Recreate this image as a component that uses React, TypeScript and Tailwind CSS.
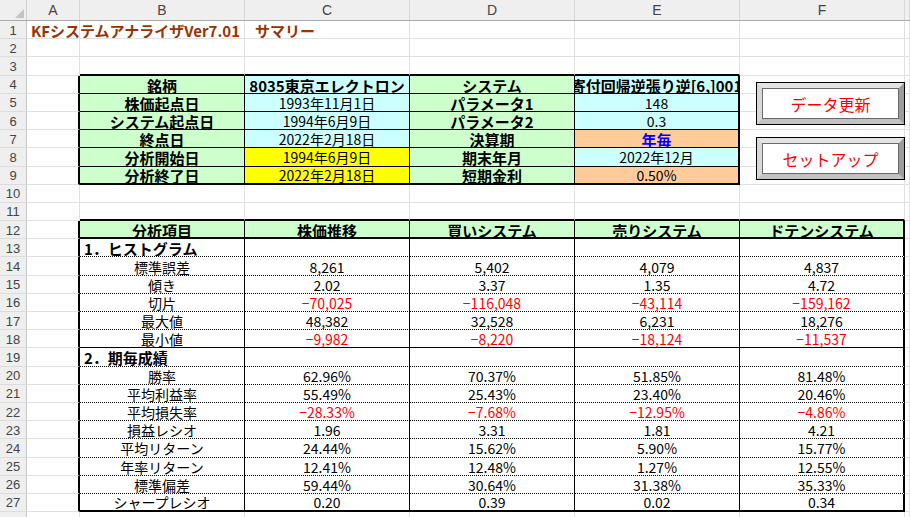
import clsx from "clsx";

type B = "g" | "1" | "2" | "d";
type Cell = { t?: string; cls?: string; al?: "l" | "c"; r?: B; b?: B; over?: boolean };

const RIGHT: Record<B, string> = {
  g: "border-r border-r-[#e1e1e1]",
  "1": "border-r border-r-black",
  "2": "border-r-2 border-r-black",
  d: "border-r border-r-black",
};
const BOTTOM: Record<B, string> = {
  g: "border-b border-b-[#e1e1e1]",
  "1": "border-b border-b-black",
  "2": "border-b-2 border-b-black",
  d: "border-b border-b-black [border-bottom-style:dotted]",
};
const W = ["w-[53px]", "w-[165px]", "w-[165px]", "w-[165px]", "w-[165px]", "w-[165px]", "flex-1"];

const GREEN = "bg-[#ccffcc] font-bold text-[15px]";
const CYAN = "bg-[#ccffff]";
const YELLOW = "bg-[#ffff00]";
const ORANGE = "bg-[#ffcc99]";
const RED = "text-[#ff0000]";

const top: [string, string, string, string, string, string][] = [
  // label, value, value class, label2, value2, value2 class
  ["銘柄", "8035東京エレクトロン", CYAN + " font-bold text-[15px]", "システム", "寄付回帰逆張り逆[6,]001", CYAN + " font-bold text-[15px]"],
  ["株価起点日", "1993年11月1日", CYAN, "パラメータ1", "148", CYAN],
  ["システム起点日", "1994年6月9日", CYAN, "パラメータ2", "0.3", CYAN],
  ["終点日", "2022年2月18日", CYAN, "決算期", "年毎", ORANGE + " font-bold text-[15px] text-[#0000ff]"],
  ["分析開始日", "1994年6月9日", YELLOW, "期末年月", "2022年12月", CYAN],
  ["分析終了日", "2022年2月18日", YELLOW, "短期金利", "0.50%", ORANGE],
];

const stats: (string | null)[][] = [
  ["1．ヒストグラム"],
  ["標準誤差", "8,261", "5,402", "4,079", "4,837"],
  ["傾き", "2.02", "3.37", "1.35", "4.72"],
  ["切片", "-70,025", "-116,048", "-43,114", "-159,162"],
  ["最大値", "48,382", "32,528", "6,231", "18,276"],
  ["最小値", "-9,982", "-8,220", "-18,124", "-11,537"],
  ["2．期毎成績"],
  ["勝率", "62.96%", "70.37%", "51.85%", "81.48%"],
  ["平均利益率", "55.49%", "25.43%", "23.40%", "20.46%"],
  ["平均損失率", "-28.33%", "-7.68%", "-12.95%", "-4.86%"],
  ["損益レシオ", "1.96", "3.31", "1.81", "4.21"],
  ["平均リターン", "24.44%", "15.62%", "5.90%", "15.77%"],
  ["年率リターン", "12.41%", "12.48%", "1.27%", "12.55%"],
  ["標準偏差", "59.44%", "30.64%", "31.38%", "35.33%"],
  ["シャープレシオ", "0.20", "0.39", "0.02", "0.34"],
];

function buildSheet(): Cell[][] {
  const rows: Cell[][] = [];
  for (let r = 0; r < 28; r++) rows.push(Array.from({ length: 7 }, () => ({})));
  const set = (row: number, col: number, c: Cell) => {
    rows[row - 1][col] = { ...rows[row - 1][col], ...c };
  };

  set(1, 0, {
    t: "KFシステムアナライザVer7.01　サマリー",
    cls: "font-bold text-[15px] text-[#993300]",
    al: "l",
    over: true,
  });

  // top table B4:E9
  for (let c = 1; c <= 4; c++) set(3, c, { b: "2" });
  top.forEach((row, i) => {
    const r = 4 + i;
    const last = r === 9;
    set(r, 0, { r: "2" });
    set(r, 1, { t: row[0], cls: GREEN, r: "1", b: last ? "2" : "1" });
    set(r, 2, { t: row[1], cls: row[2], r: "1", b: last ? "2" : "1" });
    set(r, 3, { t: row[3], cls: GREEN, r: "1", b: last ? "2" : "1" });
    set(r, 4, { t: row[4], cls: row[5], r: "2", b: last ? "2" : "1" });
  });

  // bottom table B12:F27
  for (let c = 1; c <= 5; c++) set(11, c, { b: "2" });
  set(12, 0, { r: "2" });
  ["分析項目", "株価推移", "買いシステム", "売りシステム", "ドテンシステム"].forEach((h, i) =>
    set(12, i + 1, { t: h, cls: GREEN, r: i === 4 ? "2" : "1", b: "2" })
  );
  stats.forEach((row, i) => {
    const r = 13 + i;
    const b: B = r === 27 ? "2" : r === 18 ? "1" : "d";
    set(r, 0, { r: "2" });
    for (let c = 1; c <= 5; c++) {
      const v = row[c - 1] ?? "";
      const section = row.length === 1 && c === 1;
      set(r, c, {
        t: v.startsWith("-") ? "−" + v.slice(1) : v,
        cls: section ? "font-bold text-[15px]" : v.startsWith("-") ? RED : "",
        al: section ? "l" : "c",
        r: c === 5 ? "2" : "1",
        b,
      });
    }
  });
  return rows;
}

const sheet = buildSheet();

function SheetButton({ label, top }: { label: string; top: string }) {
  return (
    <div className={clsx("absolute left-[756px] w-[149px] h-[43px] border border-black bg-white", top)}>
      <div className="h-full w-full border-[5px] border-t-[#e4e4e4] border-l-[#d8d8d8] border-r-[#9c9c9c] border-b-[#c2c2c2]">
        <div className="h-full w-full border border-[#6a6a6a] bg-white flex items-center justify-center text-[16px] leading-[18px] text-[#ff0000] pt-[1px]">
          {label}
        </div>
      </div>
    </div>
  );
}

export default function App() {
  return (
    <div className="relative h-screen w-screen overflow-hidden bg-white font-['Noto_Sans_CJK_JP',sans-serif] text-[14px] text-black">
      {/* column headers */}
      <div className="flex h-[21px] bg-[#efefef] border-b border-b-[#ababab] font-['Liberation_Sans',sans-serif] text-[14px] text-[#444]">
        <div className="relative w-[27px] shrink-0 border-r border-r-[#d0d0d0]">
          <svg className="absolute left-0 top-0" width="27" height="20" viewBox="0 0 27 20">
            <polygon points="24,9 24,18 15,18" fill="#c4c4c4" />
          </svg>
        </div>
        {["A", "B", "C", "D", "E", "F", ""].map((l, i) => (
          <div key={i} className={clsx("shrink-0 flex items-center justify-center border-r border-r-[#d6d6d6]", W[i])}>
            {l}
          </div>
        ))}
      </div>

      {sheet.map((cells, ri) => (
        <div key={ri} className="flex h-[18.2px]">
          <div className="w-[27px] shrink-0 bg-[#efefef] border-r border-r-[#c8c8c8] border-b border-b-[#dcdcdc] font-['Liberation_Sans',sans-serif] text-[13px] leading-[15px] text-[#444] flex items-center justify-center pt-[1px]">
            {ri + 1}
          </div>
          {cells.map((c, ci) => (
            <div
              key={ci}
              className={clsx(
                "shrink-0 flex items-center whitespace-nowrap leading-[15px] pt-[2px]",
                c.over ? "overflow-visible" : "overflow-hidden",
                W[ci],
                RIGHT[c.r ?? "g"],
                BOTTOM[c.b ?? "g"],
                c.al === "l" ? "justify-start pl-[4px]" : "justify-center",
                c.cls
              )}
            >
              {c.t}
            </div>
          ))}
        </div>
      ))}

      <SheetButton label="データ更新" top="top-[82px]" />
      <SheetButton label="セットアップ" top="top-[137px]" />
    </div>
  );
}
